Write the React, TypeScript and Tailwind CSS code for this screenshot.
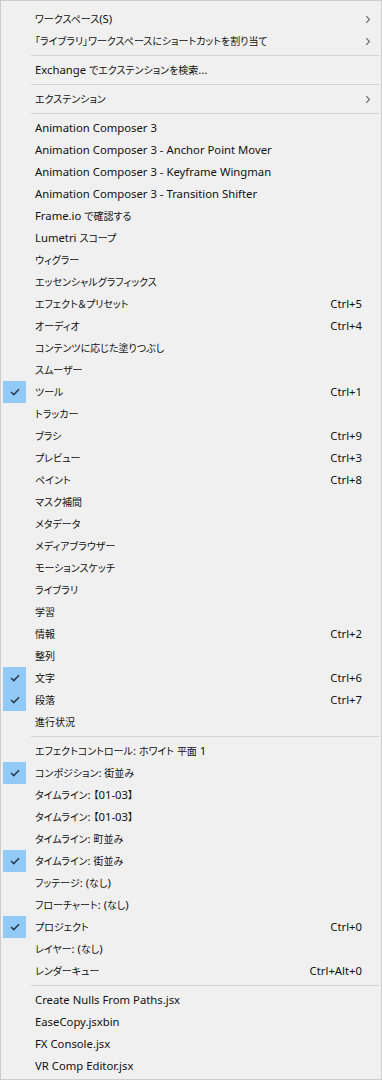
type Item =
  | { sep: true }
  | { label: string; shortcut?: string; checked?: boolean; sub?: boolean; sep?: false };

const items: Item[] = [
  { label: "ワークスペース(S)", sub: true },
  { label: "「ライブラリ」ワークスペースにショートカットを割り当て", sub: true },
  { sep: true },
  { label: "Exchange でエクステンションを検索..." },
  { sep: true },
  { label: "エクステンション", sub: true },
  { sep: true },
  { label: "Animation Composer 3" },
  { label: "Animation Composer 3 - Anchor Point Mover" },
  { label: "Animation Composer 3 - Keyframe Wingman" },
  { label: "Animation Composer 3 - Transition Shifter" },
  { label: "Frame.io で確認する" },
  { label: "Lumetri スコープ" },
  { label: "ウィグラー" },
  { label: "エッセンシャルグラフィックス" },
  { label: "エフェクト＆プリセット", shortcut: "Ctrl+5" },
  { label: "オーディオ", shortcut: "Ctrl+4" },
  { label: "コンテンツに応じた塗りつぶし" },
  { label: "スムーザー" },
  { label: "ツール", shortcut: "Ctrl+1", checked: true },
  { label: "トラッカー" },
  { label: "ブラシ", shortcut: "Ctrl+9" },
  { label: "プレビュー", shortcut: "Ctrl+3" },
  { label: "ペイント", shortcut: "Ctrl+8" },
  { label: "マスク補間" },
  { label: "メタデータ" },
  { label: "メディアブラウザー" },
  { label: "モーションスケッチ" },
  { label: "ライブラリ" },
  { label: "学習" },
  { label: "情報", shortcut: "Ctrl+2" },
  { label: "整列" },
  { label: "文字", shortcut: "Ctrl+6", checked: true },
  { label: "段落", shortcut: "Ctrl+7", checked: true },
  { label: "進行状況" },
  { sep: true },
  { label: "エフェクトコントロール: ホワイト 平面 1" },
  { label: "コンポジション: 街並み", checked: true },
  { label: "タイムライン: 【01-03】" },
  { label: "タイムライン: 【01-03】" },
  { label: "タイムライン: 町並み" },
  { label: "タイムライン: 街並み", checked: true },
  { label: "フッテージ: (なし)" },
  { label: "フローチャート: (なし)" },
  { label: "プロジェクト", shortcut: "Ctrl+0", checked: true },
  { label: "レイヤー: (なし)" },
  { label: "レンダーキュー", shortcut: "Ctrl+Alt+0" },
  { sep: true },
  { label: "Create Nulls From Paths.jsx" },
  { label: "EaseCopy.jsxbin" },
  { label: "FX Console.jsx" },
  { label: "VR Comp Editor.jsx" },
];

// Japanese runs are set a touch smaller than the Latin ones, like Meiryo UI
const cjk = /([\u3000-\u30ff\u4e00-\u9fff\uff00-\uffef]+)/;

function Label({ text }: { text: string }) {
  return (
    <>
      {text.split(cjk).map((part, i) =>
        cjk.test(part) ? (
          <span key={i} className="text-[10px]">
            {part}
          </span>
        ) : (
          part
        )
      )}
    </>
  );
}

function Check() {
  return (
    <svg width="10" height="8" viewBox="0 0 10 8" fill="none">
      <path d="M1 4 L3.8 6.6 L9 1.2" stroke="#2b3a48" strokeWidth="1.5" />
    </svg>
  );
}

function Chevron() {
  return (
    <svg width="6" height="9" viewBox="0 0 6 9" fill="none">
      <path d="M1.3 1.2 L4.4 4.5 L1.3 7.8" stroke="#666" strokeWidth="1.1" />
    </svg>
  );
}

export default function App() {
  return (
    <div className="w-[382px] h-[1080px] bg-[#f0f0f0] border border-[#cccccc] pt-[7px] pb-[2px] text-[11.3px] text-[#111] font-['Noto_Sans','Noto_Sans_CJK_JP',sans-serif] [font-feature-settings:'palt'] overflow-hidden">
      {items.map((item, i) =>
        item.sep ? (
          <div key={i} className="h-[7px] flex items-center pl-[30px] pr-[2px]">
            <div className="h-px w-full bg-[#d5d5d5]" />
          </div>
        ) : (
          <div key={i} className="h-[22px] flex items-center">
            <div className="w-[34px] h-full flex shrink-0">
              {item.checked && (
                <div className="ml-[2px] w-[23px] h-full bg-[#91c9f7] flex items-center justify-center">
                  <Check />
                </div>
              )}
            </div>
            <span className="flex-1 whitespace-nowrap leading-none">
              <Label text={item.label} />
            </span>
            {item.shortcut && (
              <span className="mr-[19px] whitespace-nowrap leading-none">{item.shortcut}</span>
            )}
            {item.sub && (
              <span className="mr-[10px] flex items-center">
                <Chevron />
              </span>
            )}
          </div>
        )
      )}
    </div>
  );
}
